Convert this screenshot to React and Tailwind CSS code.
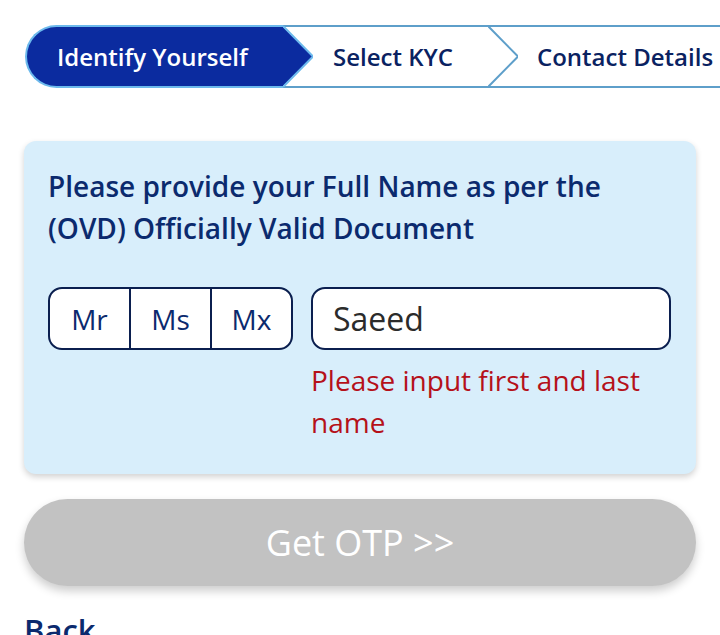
import React from 'react';

const Chevron = ({ active }) => (
  <svg width="30" height="63" viewBox="0 0 30 63" className="shrink-0 block">
    <line x1="0" y1="1" x2="30" y2="1" stroke="#5e9fca" strokeWidth="2" />
    <line x1="0" y1="62" x2="30" y2="62" stroke="#5e9fca" strokeWidth="2" />
    {active ? (
      <>
        <polygon points="-1,1 30,31.5 -1,62" fill="#0b2b9f" />
        <polyline points="0,1 30,31.5 0,62" fill="none" stroke="#6cb9ec" strokeWidth="2" />
      </>
    ) : (
      <polyline points="0,1 30,31.5 0,62" fill="none" stroke="#5e9fca" strokeWidth="2" />
    )}
  </svg>
);

const App = () => {
  const titles = ['Mr', 'Ms', 'Mx'];

  return (
    <div className="w-[720px] h-[635px] overflow-hidden bg-white font-['Open_Sans',sans-serif]">
      {/* stepper */}
      <div className="flex pt-[25px] pl-[25px] whitespace-nowrap">
        <div className="w-[258px] h-[63px] shrink-0 flex items-center pl-[30px] bg-[#0b2b9f] rounded-l-full border-2 border-r-0 border-[#6cb9ec] text-white text-[24px] font-semibold">
          Identify Yourself
        </div>
        <Chevron active />
        <div className="w-[175px] h-[63px] shrink-0 flex items-center pl-[20px] border-y-2 border-[#5e9fca] text-[#0a2261] text-[24px] font-semibold">
          Select KYC
        </div>
        <Chevron />
        <div className="w-[300px] h-[63px] shrink-0 flex items-center pl-[19px] border-y-2 border-[#5e9fca] text-[#0a2261] text-[24px] font-semibold">
          Contact Details
        </div>
      </div>

      <div className="px-[24px] pt-[53px]">
        {/* card */}
        <div className="bg-[#d8eefb] rounded-xl shadow-[0_3px_6px_rgba(0,0,0,0.18)] pl-[24px] pr-[25px] pt-[24px] pb-[31px]">
          <p className="text-[28px] leading-[42px] font-semibold text-[#0b2a6e]">
            Please provide your Full Name as per the (OVD) Officially Valid Document
          </p>
          <div className="flex gap-[18px] mt-[38px]">
            <div className="w-[245px] h-[63px] shrink-0 flex bg-white border-2 border-[#0b1f4f] rounded-[14px] overflow-hidden">
              {titles.map((t, i) => (
                <div
                  key={t}
                  className={`flex-1 flex items-center justify-center text-[28px] text-[#0b2a6e] ${i > 0 ? 'border-l-2 border-[#0b1f4f]' : ''}`}
                >
                  {t}
                </div>
              ))}
            </div>
            <div className="flex-1">
              <div className="h-[63px] flex items-center pl-[20px] bg-white border-2 border-[#0b1f4f] rounded-[14px] text-[32px] text-[#2b2b2b]">
                Saeed
              </div>
              <p className="mt-[9px] text-[28px] leading-[42px] text-[#b5111a]">
                Please input first and last name
              </p>
            </div>
          </div>
        </div>

        {/* button */}
        <button className="mt-[25px] w-full h-[87px] rounded-full bg-[#c2c2c2] shadow-[0_5px_10px_rgba(0,0,0,0.2)] text-white text-[36px] flex items-center justify-center">
          Get OTP &gt;&gt;
        </button>

        <div className="mt-[24px] text-[31px] leading-[40px] font-semibold text-[#0b2a6e]">Back</div>
      </div>
    </div>
  );
};

export default App;
